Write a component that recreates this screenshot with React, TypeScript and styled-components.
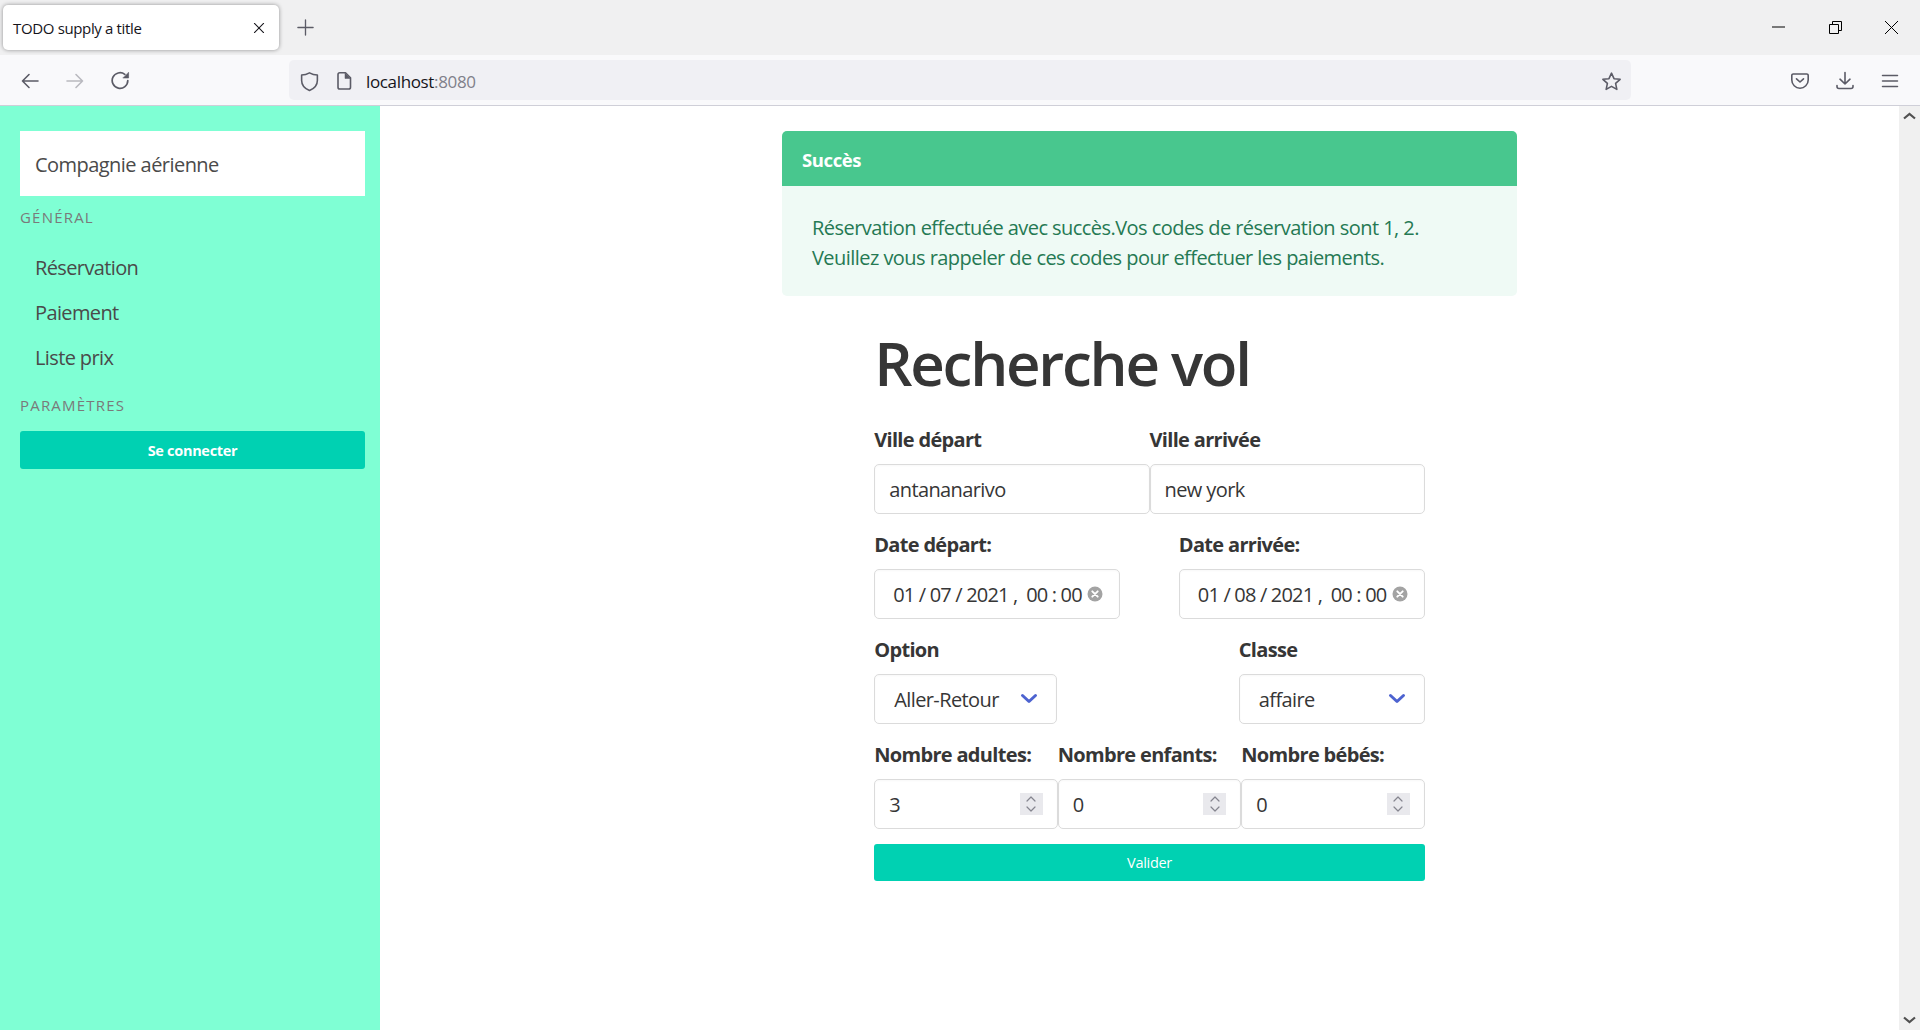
import React from "react";
import styled, { createGlobalStyle } from "styled-components";

const Global = createGlobalStyle`
  html, body { margin: 0; padding: 0; height: 100%; overflow: hidden; background: #fff; }
  #root { height: 100%; }
  * { box-sizing: border-box; }
  body { font-family: "Open Sans", "Noto Sans", sans-serif; color: #4a4a4a; }
`;

const Frame = styled.div`
  width: 1920px; height: 1030px; display: flex; flex-direction: column; position: relative; overflow: hidden;
`;
const TabStrip = styled.div`
  height: 55px; background: #f0f0f1; display: flex; align-items: flex-start; flex: none;
`;
const Tab = styled.div`
  width: 276px; height: 45px; margin: 5px 0 0 3px; background: #fff; border-radius: 5px;
  box-shadow: 0 0 4px rgba(0,0,0,.4); display: flex; align-items: center; justify-content: space-between;
  padding: 0 13px 0 10px; font-size: 15px; letter-spacing: -0.35px; color: #15141a;
`;
const NewTab = styled.div`
  width: 30px; height: 30px; margin: 12px 0 0 11px; display: flex; align-items: center; justify-content: center; color: #5b5b66;
`;
const WindowControls = styled.div`
  margin-left: auto; display: flex; height: 55px;
`;
const WindowButton = styled.div`
  width: 56.6px; height: 54px; display: flex; align-items: center; justify-content: center; color: #000;
`;
const Toolbar = styled.div`
  height: 51px; flex: none; background: #f9f9fb; border-bottom: 1px solid #cfcfd8; display: flex; align-items: center; padding: 0 7.5px;
`;
const ToolButton = styled.div<{ $dim?: boolean }>`
  width: 45px; height: 40px; padding-top: 2px; display: flex; align-items: center; justify-content: center;
  color: ${(p) => (p.$dim ? "#b9b9bf" : "#5b5b66")};
`;
const ReloadButton = styled(ToolButton)`
  padding-left: 2px;
`;
const UrlBar = styled.div`
  width: 1342px; height: 40px; margin-left: 146.5px; padding: 2px 0 0 10px; background: #f0f0f4; border-radius: 5px; display: flex; align-items: center;
  color: #5b5b66;
`;
const UrlIconGap = styled.span`
  width: 14px; flex: none;
`;
const UrlText = styled.span`
  margin-left: 12px; font-size: 17px; letter-spacing: -0.35px; color: #15141a;
`;
const UrlPort = styled.span`
  color: #80808a;
`;
const StarSlot = styled.div`
  margin-left: auto; width: 40px; display: flex; justify-content: center;
`;
const ToolbarEnd = styled.div`
  margin-left: auto; display: flex;
`;
const Content = styled.div`
  flex: 1; display: flex; min-height: 0; position: relative;
`;
const Sidebar = styled.aside`
  width: 380px; flex: none; background: #7fffd4; padding: 25px 15px 0 20px;
`;
const Brand = styled.div`
  height: 65px; padding: 2px 0 0 15px; background: #fff; display: flex; align-items: center; font-size: 20px; letter-spacing: -0.55px; color: #4a4a4a;
`;
const MenuLabel = styled.p<{ $top: number; $bottom: number }>`
  margin: ${(p) => p.$top}px 0 ${(p) => p.$bottom}px; font-size: 15px; line-height: 22.5px; letter-spacing: 1.2px; text-transform: uppercase; color: #7a7a7a;
`;
const MenuList = styled.ul`
  list-style: none; margin: 0; padding: 0;
`;
const MenuItem = styled.li`
  height: 45px; line-height: 45px; padding-left: 15px; font-size: 20px; letter-spacing: -0.62px; color: #4a4a4a;
`;
const PrimaryButton = styled.button<{ $bold?: boolean; $h: number }>`
  display: block; width: 100%; height: ${(p) => p.$h}px; border: 0; border-radius: 3px; background: #00d1b2; color: #fff;
  font-family: inherit; font-size: 14.5px; letter-spacing: -0.3px; font-weight: ${(p) => (p.$bold ? 700 : 400)};
  padding: ${(p) => (p.$bold ? "2px 0 0" : "0")};
`;
const Main = styled.main`
  flex: 1; display: flex; flex-direction: column; align-items: center; padding: 25px 1px 0 0;
`;
const Message = styled.section`
  width: 735px; border-radius: 5px; overflow: hidden; background: #effaf5;
`;
const MessageHeader = styled.div`
  height: 55px; padding: 1px 0 0 20px; background: #48c78e; color: #fff; font-weight: 700; font-size: 18.5px; letter-spacing: -0.4px; display: flex; align-items: center;
`;
const MessageBody = styled.div`
  height: 110px; padding: 27px 30px 0; font-size: 20px; line-height: 30px; letter-spacing: -0.55px; color: #257953;
`;
const FormWrap = styled.form`
  width: 550.6px; display: flex; flex-direction: column;
`;
const Title = styled.h1`
  margin: 28px 0 23px; font-size: 60px; line-height: 78px; font-weight: 600; letter-spacing: -2.25px; color: #363636;
`;
const Row = styled.div<{ $cols?: string; $between?: boolean }>`
  display: ${(p) => (p.$between ? "flex" : "grid")};
  justify-content: space-between;
  grid-template-columns: ${(p) => p.$cols || "none"};
  margin-bottom: 16px;
  &:last-of-type { margin-bottom: 15px; }
`;
const Field = styled.div<{ $w?: number }>`
  ${(p) => (p.$w ? `width: ${p.$w}px;` : "")}
  min-width: 0;
`;
const Label = styled.label`
  display: block; font-size: 20px; line-height: 30px; font-weight: 700; letter-spacing: -0.68px; color: #363636; margin-bottom: 9px; white-space: nowrap;
`;
const Control = styled.div`
  height: 50px; border: 1px solid #dbdbdb; border-radius: 5px; background: #fff; display: flex; align-items: center;
  font-size: 20px; letter-spacing: -0.6px; color: #363636; padding: 0 14px; position: relative;
  box-shadow: inset 0 1px 2px rgba(10,10,10,.03);
`;
const DateText = styled.span`
  margin-left: 4px; white-space: pre; letter-spacing: -0.82px; font-size: 20px;
`;
const ClearIcon = styled.svg`
  margin-left: auto; margin-right: 2px; flex: none;
`;
const SelectText = styled.span<{ $pad: number }>`
  padding-left: ${(p) => p.$pad}px;
`;
const Chevron = styled.svg<{ $r: number }>`
  margin-left: auto; margin-right: ${(p) => p.$r}px; flex: none;
`;
const Spinner = styled.div`
  margin-left: auto; width: 23px; height: 22px; background: #e9e9ed; flex: none; display: flex; align-items: center; justify-content: center;
`;
const ScrollTrack = styled.div`
  position: absolute; top: 0; right: 0; bottom: 0; width: 21px; background: #f0f0f0; display: flex; flex-direction: column; justify-content: space-between; align-items: center; padding: 6px 0; color: #505050;
`;

const I = ({ children, s = 20, sw = 1.6 }: { children: React.ReactNode; s?: number; sw?: number }) => (
  <svg width={s} height={s} viewBox="0 0 20 20" fill="none" stroke="currentColor" strokeWidth={sw} strokeLinecap="round" strokeLinejoin="round">
    {children}
  </svg>
);

const Down = ({ r }: { r: number }) => (
  <Chevron $r={r} width="18" height="12" viewBox="0 0 18 12" fill="none" stroke="#4d63d0" strokeWidth="3" strokeLinecap="round" strokeLinejoin="round">
    <path d="M2.5 2.5 L9 8.5 L15.5 2.5" />
  </Chevron>
);

const Clear = () => (
  <ClearIcon width="16" height="16" viewBox="0 0 16 16">
    <circle cx="8" cy="8" r="7.5" fill="#a3a3a3" />
    <path d="M5.3 5.3 L10.7 10.7 M10.7 5.3 L5.3 10.7" stroke="#fff" strokeWidth="1.9" strokeLinecap="round" />
  </ClearIcon>
);

const Spin = () => (
  <Spinner>
    <svg width="12" height="20" viewBox="0 0 12 20" fill="none" stroke="#85858f" strokeWidth="1.2" strokeLinecap="round" strokeLinejoin="round">
      <path d="M2 7 L6 3 L10 7 M2 13 L6 17 L10 13" />
    </svg>
  </Spinner>
);

export default function App() {
  return (
    <Frame>
      <Global />
      <TabStrip>
        <Tab>
          <span>TODO supply a title</span>
          <I s={14} sw={1.5}><path d="M3.5 3.5 L16.5 16.5 M16.5 3.5 L3.5 16.5" /></I>
        </Tab>
        <NewTab><I s={19} sw={1.4}><path d="M10 2 V18 M2 10 H18" /></I></NewTab>
        <WindowControls>
          <WindowButton><svg width="13" height="2" viewBox="0 0 13 2"><path d="M0 1 H13" stroke="currentColor" strokeWidth="1" /></svg></WindowButton>
          <WindowButton>
            <svg width="13" height="13" viewBox="0 0 13 13" fill="none" stroke="currentColor" strokeWidth="1">
              <path d="M0.5 3.5 H9.5 V12.5 H0.5 Z M3.5 3.5 V0.5 H12.5 V9.5 H9.5" />
            </svg>
          </WindowButton>
          <WindowButton><svg width="15" height="15" viewBox="0 0 15 15"><path d="M1 1 L14 14 M14 1 L1 14" stroke="currentColor" strokeWidth="1" /></svg></WindowButton>
        </WindowControls>
      </TabStrip>
      <Toolbar>
        <ToolButton><I><path d="M18 10 H2.5 M9 3.5 L2.5 10 L9 16.5" /></I></ToolButton>
        <ToolButton $dim><I><path d="M2 10 H17.5 M11 3.5 L17.5 10 L11 16.5" /></I></ToolButton>
        <ReloadButton>
          <I sw={1.7}>
            <path d="M16.8 9.5 A7.8 7.8 0 1 1 13.8 3.4" />
            <path d="M17.6 1.6 V7 H12.2 Z" fill="currentColor" strokeWidth="0.6" />
          </I>
        </ReloadButton>
        <UrlBar>
          <I s={21} sw={1.5}><path d="M10 1.8 C12.5 3.2 15 3.8 17.5 3.8 V9 C17.5 13.5 14.5 16.7 10 18.6 C5.5 16.7 2.5 13.5 2.5 9 V3.8 C5 3.8 7.5 3.2 10 1.8 Z" /></I>
          <UrlIconGap />
          <I s={20} sw={1.6}><path d="M4 3.6 A1.8 1.8 0 0 1 5.8 1.8 H11.5 L16.5 6.8 V16.2 A1.8 1.8 0 0 1 14.7 18 H5.8 A1.8 1.8 0 0 1 4 16.2 Z" /><path d="M11 2 V7.5 H16.5" fill="currentColor" strokeWidth="0.5" /></I>
          <UrlText>localhost<UrlPort>:8080</UrlPort></UrlText>
          <StarSlot>
            <I s={21} sw={1.5}><path d="M10 2 L12.4 7.3 L18.2 7.9 L13.9 11.8 L15.1 17.5 L10 14.6 L4.9 17.5 L6.1 11.8 L1.8 7.9 L7.6 7.3 Z" /></I>
          </StarSlot>
        </UrlBar>
        <ToolbarEnd>
          <ToolButton>
            <I s={20} sw={1.6}><path d="M3.3 3 H16.7 A1.4 1.4 0 0 1 18.2 4.4 V9 A8.2 8.2 0 0 1 1.8 9 V4.4 A1.4 1.4 0 0 1 3.3 3 Z" /><path d="M6.5 7.8 L10 11 L13.5 7.8" /></I>
          </ToolButton>
          <ToolButton>
            <I s={20} sw={1.6}><path d="M10 1.5 V13 M5 8.2 L10 13 L15 8.2 M2 14.5 V15.5 A2 2 0 0 0 4 17.5 H16 A2 2 0 0 0 18 15.5 V14.5" /></I>
          </ToolButton>
          <ToolButton>
            <I s={20} sw={1.5}><path d="M2.5 4.5 H17.5 M2.5 10 H17.5 M2.5 15.5 H17.5" /></I>
          </ToolButton>
        </ToolbarEnd>
      </Toolbar>
      <Content>
        <Sidebar>
          <Brand>Compagnie aérienne</Brand>
          <MenuLabel $top={10} $bottom={16.5}>Général</MenuLabel>
          <MenuList>
            <MenuItem>Réservation</MenuItem>
            <MenuItem>Paiement</MenuItem>
            <MenuItem>Liste prix</MenuItem>
          </MenuList>
          <MenuLabel $top={14} $bottom={14}>Paramètres</MenuLabel>
          <PrimaryButton type="button" $bold $h={38}>Se connecter</PrimaryButton>
        </Sidebar>
        <Main>
          <Message>
            <MessageHeader>Succès</MessageHeader>
            <MessageBody>
              Réservation effectuée avec succès.Vos codes de réservation sont 1, 2.
              <br />
              Veuillez vous rappeler de ces codes pour effectuer les paiements.
            </MessageBody>
          </Message>
          <FormWrap>
            <Title>Recherche vol</Title>
            <Row $cols="1fr 1fr">
              <Field><Label>Ville départ</Label><Control>antananarivo</Control></Field>
              <Field><Label>Ville arrivée</Label><Control>new york</Control></Field>
            </Row>
            <Row $between>
              <Field $w={246}><Label>Date départ:</Label><Control><DateText>01 / 07 / 2021 ,  00 : 00</DateText><Clear /></Control></Field>
              <Field $w={246}><Label>Date arrivée:</Label><Control><DateText>01 / 08 / 2021 ,  00 : 00</DateText><Clear /></Control></Field>
            </Row>
            <Row $between>
              <Field $w={183}><Label>Option</Label><Control><SelectText $pad={5}>Aller-Retour</SelectText><Down r={4} /></Control></Field>
              <Field $w={186}><Label>Classe</Label><Control><SelectText $pad={5}>affaire</SelectText><Down r={4} /></Control></Field>
            </Row>
            <Row $cols="repeat(3, 1fr)">
              <Field><Label>Nombre adultes:</Label><Control>3<Spin /></Control></Field>
              <Field><Label>Nombre enfants:</Label><Control>0<Spin /></Control></Field>
              <Field><Label>Nombre bébés:</Label><Control>0<Spin /></Control></Field>
            </Row>
            <PrimaryButton type="submit" $h={37}>Valider</PrimaryButton>
          </FormWrap>
        </Main>
        <ScrollTrack>
          <svg width="13" height="8" viewBox="0 0 13 8" fill="none" stroke="currentColor" strokeWidth="2.2"><path d="M1 6.5 L6.5 2 L12 6.5" /></svg>
          <svg width="13" height="8" viewBox="0 0 13 8" fill="none" stroke="currentColor" strokeWidth="2.2"><path d="M1 1.5 L6.5 6 L12 1.5" /></svg>
        </ScrollTrack>
      </Content>
    </Frame>
  );
}
